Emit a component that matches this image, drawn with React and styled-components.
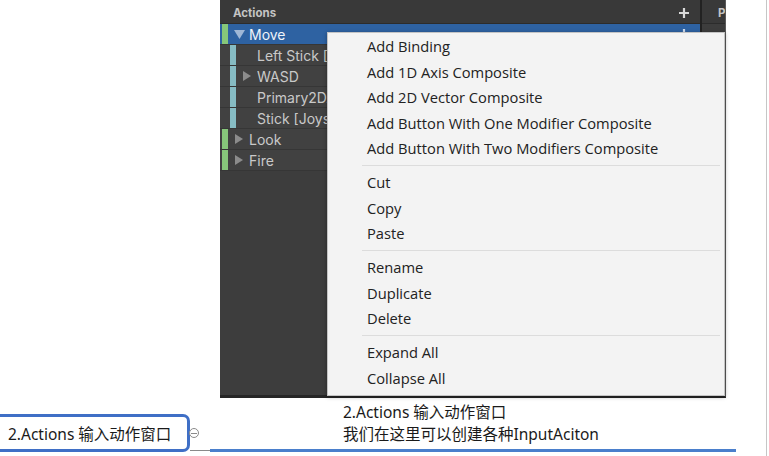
import React from "react";
import styled, { createGlobalStyle } from "styled-components";

const Global = createGlobalStyle`
  html, body { margin: 0; padding: 0; background: #fff; }
  body { font-family: "Noto Sans", "Noto Sans CJK SC", sans-serif; }
`;

const Root = styled.div`
  width: 766px;
  height: 456px;
  border-right: 1px solid #c6c6c6;
  display: flex;
  flex-direction: column;
  overflow: hidden;
`;

const Top = styled.div`
  display: flex;
  height: 398px;
  padding-left: 220px;
`;

const Panel = styled.div`
  position: relative;
  width: 505px;
  height: 395px;
  display: flex;
  background: #3d3d3d;
  border-right: 1px solid #5a5a5a;
  border-bottom: 3px solid #262626;
`;

const ActionsPane = styled.div`
  width: 480px;
  display: flex;
  flex-direction: column;
`;

const Divider = styled.div`
  width: 2px;
  background: #222;
`;

const PropsPane = styled.div`
  flex: 1;
  min-width: 0;
  display: flex;
  flex-direction: column;
`;

const Header = styled.div`
  height: 24px;
  box-sizing: border-box;
  display: flex;
  align-items: center;
  justify-content: space-between;
  padding: 2px ${(p) => p.$padR ?? 10}px 0 ${(p) => p.$pad || 13}px;
  background: #393939;
  border-bottom: 1px solid #2c2c2c;
  font-family: "Inter", "Noto Sans", sans-serif;
  font-size: 11.5px;
  font-weight: 700;
  color: #c4c4c4;
  overflow: hidden;
  white-space: nowrap;
`;

const PlusIcon = ({ color = "#d8d8d8" }) => (
  <svg width="12" height="12" viewBox="0 0 12 12">
    <path d="M6 1v10M1 6h10" stroke={color} strokeWidth="2.2" />
  </svg>
);

const Row = styled.div`
  height: 20px;
  display: flex;
  align-items: stretch;
  background: ${(p) => (p.$selected ? "#2e62a2" : "#414141")};
  border-bottom: 1px solid #363636;
  font-family: "Inter", "DejaVu Sans", sans-serif;
  font-size: 14px;
  color: ${(p) => (p.$selected ? "#eef3f9" : "#c9c9c9")};
`;

const ColorBar = styled.div`
  width: 6px;
  margin-left: ${(p) => 2 + p.$depth * 8}px;
  background: ${(p) => (p.$depth ? "#86bcc4" : "#86c77a")};
`;

const Arrow = styled.div`
  width: 16px;
  margin-left: 3px;
  display: flex;
  align-items: center;
  justify-content: center;
`;

const Label = styled.div`
  flex: 1;
  display: flex;
  align-items: center;
  margin-left: 2px;
  white-space: nowrap;
  overflow: hidden;
`;

const RowPlus = styled.div`
  display: flex;
  align-items: center;
  padding-right: 10px;
`;

const Triangle = ({ open, color }) =>
  open ? (
    <svg width="11" height="9" viewBox="0 0 11 9">
      <polygon points="0,0 11,0 5.5,9" fill={color} />
    </svg>
  ) : (
    <svg width="8" height="10" viewBox="0 0 8 10">
      <polygon points="0,0 8,5 0,10" fill={color} />
    </svg>
  );

const Menu = styled.div`
  position: absolute;
  left: 107px;
  right: 0;
  top: 32px;
  bottom: -1px;
  background: #f3f3f3;
  border: 1px solid #c4c4c4;
  box-shadow: 0 1px 4px rgba(0, 0, 0, 0.35);
  padding-top: 1px;
  font-family: "Open Sans", "Noto Sans", sans-serif;
  font-size: 14.7px;
  color: #222;
`;

const Item = styled.div`
  height: 25.5px;
  line-height: 25.5px;
  padding-left: 39px;
  white-space: nowrap;
`;

const Sep = styled.div`
  height: 8.5px;
  margin: 0 4px 0 34px;
  display: flex;
  align-items: center;
  &::after {
    content: "";
    flex: 1;
    height: 1px;
    background: #dcdcdc;
  }
`;

const Bottom = styled.div`
  flex: 1;
  display: flex;
  align-items: flex-start;
`;

const Node = styled.div`
  position: relative;
  margin-left: -12px;
  margin-top: 16px;
  width: 179px;
  height: 32px;
  border: 3px solid #3f6fc6;
  border-radius: 7px;
  display: flex;
  align-items: center;
  padding-left: 17px;
  box-sizing: content-box;
  font-size: 15.5px;
  color: #1a1a1a;
  white-space: nowrap;
`;

const Collapse = styled.div`
  position: absolute;
  right: -12px;
  top: 11px;
  width: 8px;
  height: 8px;
  border: 1px solid #8a8a8a;
  border-radius: 50%;
  background: #fff;
  display: flex;
  align-items: center;
  justify-content: center;
  &::after {
    content: "";
    width: 6px;
    height: 1px;
    background: #8a8a8a;
  }
`;

const Topic = styled.div`
  width: 546px;
  display: flex;
  flex-direction: column;
`;

const Caption = styled.div`
  padding: 3px 0 0 153px;
  font-size: 15.5px;
  line-height: 22px;
  color: #1a1a1a;
  white-space: nowrap;
`;

const Connector = styled.div`
  margin-top: 4px;
  display: flex;
  align-items: center;
  height: 3px;
`;

const GrayLine = styled.div`
  width: 20px;
  height: 1px;
  background: #8a8a8a;
`;

const BlueLine = styled.div`
  flex: 1;
  height: 3px;
  background: #4a7fcc;
`;

const rows = [
  { depth: 0, label: "Move", open: true, selected: true },
  { depth: 1, label: "Left Stick [Gamepad]" },
  { depth: 1, label: "WASD", closed: true },
  { depth: 1, label: "Primary2DAxis [XR Controller]" },
  { depth: 1, label: "Stick [Joystick]" },
  { depth: 0, label: "Look", closed: true },
  { depth: 0, label: "Fire", closed: true },
];

const menu = [
  ["Add Binding", "Add 1D Axis Composite", "Add 2D Vector Composite", "Add Button With One Modifier Composite", "Add Button With Two Modifiers Composite"],
  ["Cut", "Copy", "Paste"],
  ["Rename", "Duplicate", "Delete"],
  ["Expand All", "Collapse All"],
];

export default function App() {
  return (
    <>
      <Global />
      <Root>
        <Top>
          <Panel>
            <ActionsPane>
              <Header>
                Actions
                <PlusIcon />
              </Header>
              {rows.map((r) => (
                <Row key={r.label} $selected={r.selected}>
                  <ColorBar $depth={r.depth} />
                  <Arrow>
                    {(r.open || r.closed) && (
                      <Triangle open={r.open} color={r.selected ? "#9fb7d6" : "#8c8c8c"} />
                    )}
                  </Arrow>
                  <Label>{r.label}</Label>
                  {r.selected && (
                    <RowPlus>
                      <PlusIcon color="#cfdcee" />
                    </RowPlus>
                  )}
                </Row>
              ))}
            </ActionsPane>
            <Divider />
            <PropsPane>
              <Header $pad={16} $padR={0}>P</Header>
            </PropsPane>
            <Menu>
              {menu.map((group, i) => (
                <React.Fragment key={i}>
                  {i > 0 && <Sep />}
                  {group.map((t) => (
                    <Item key={t}>{t}</Item>
                  ))}
                </React.Fragment>
              ))}
            </Menu>
          </Panel>
        </Top>
        <Bottom>
          <Node>
            2.Actions 输入动作窗口
            <Collapse />
          </Node>
          <Topic>
            <Caption>
              2.Actions 输入动作窗口
              <br />
              我们在这里可以创建各种InputAciton
            </Caption>
            <Connector>
              <GrayLine />
              <BlueLine />
            </Connector>
          </Topic>
        </Bottom>
      </Root>
    </>
  );
}
